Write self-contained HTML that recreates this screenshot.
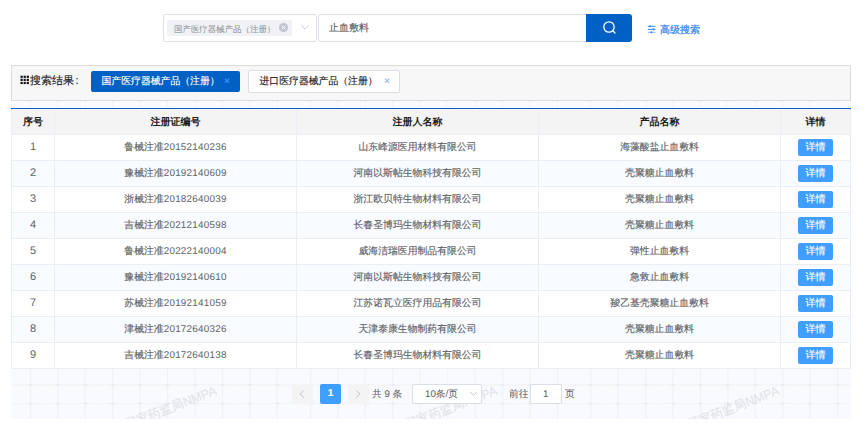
<!DOCTYPE html>
<html><head><meta charset="utf-8">
<style>
*{box-sizing:border-box;margin:0;padding:0}
html,body{width:867px;height:426px;overflow:hidden;background:#fff;font-family:"Liberation Sans",sans-serif;color:#606266;text-rendering:geometricPrecision;-webkit-text-stroke:0.15px currentColor}
.abs{position:absolute}
/* search */
#sel{left:163px;top:14px;width:154px;height:28px;border:1px solid #dcdfe6;border-radius:3px;background:#fff}
#seltag{left:167px;top:20px;width:125px;height:16px;background:#f0f2f5;border-radius:2px;font-size:8.45px;color:#909399;line-height:19px;padding-left:7px;white-space:nowrap;-webkit-text-stroke:0.05px currentColor}
#selx{left:279px;top:23px;width:9px;height:9px;border-radius:50%;background:#c0c4cc}
#inp{left:318px;top:14px;width:270px;height:28px;border:1px solid #dcdfe6;border-radius:3px 0 0 3px;background:#fff;font-size:10px;line-height:28px;padding-left:10px;color:#606266}
#btn{left:586px;top:14px;width:46px;height:28px;background:#0060c3;border-radius:0 3px 3px 0}
#adv{left:647px;top:24px;font-size:10px;color:#2f85f5;-webkit-text-stroke:0.25px currentColor;line-height:14px;white-space:nowrap}
/* result box */
#res{left:11px;top:65px;width:840px;height:36px;border:1px solid #dcdcdc;background:#f7f7f7}
#reslbl{left:30px;top:73px;font-size:11px;line-height:16px;color:#222;white-space:nowrap}
.tag{position:absolute;top:71px;height:21px;font-size:9.85px;line-height:21.5px;white-space:nowrap;padding-left:10.5px}
#tag1{left:91px;width:149px;background:#0060c3;color:#fff;border-radius:2px}
#tag2{left:248px;top:70px;height:23px;width:152px;background:#fff;border:1px solid #dcdfe6;border-radius:2px;color:#222;line-height:21.5px}
.tag .x{position:absolute;font-size:10px;color:#8ab6f0}
/* grid bg */
#grid{left:11px;top:101px;width:840px;height:318px;background-color:#f9fafd}
/* table */
#tbl{left:11px;top:108px;width:840px;border-collapse:collapse;table-layout:fixed}
#blue{left:11px;top:108px;width:840px;height:1px;background:#0a5fc4}
#tbl td,#tbl th{border:1px solid #ebeef5;text-align:center;font-size:10px;white-space:nowrap;padding:0}
#tbl th{height:26px;background:#f4f4f4;color:#1a1a1a;font-weight:bold;-webkit-text-stroke:0}
#tbl td{height:26px;background:#fff;color:#606266;font-size:9.85px;padding-bottom:1px}
.n{letter-spacing:0.25px;-webkit-text-stroke:0}
#tbl td.i{font-size:11px;-webkit-text-stroke:0;padding-bottom:0.5px}
#tbl tr.s td{background:#f8fbff}
.db{display:inline-block;width:35px;height:17px;line-height:17px;background:#409eff;color:#fff;border-radius:2px;font-size:10px;vertical-align:middle}
/* pagination */
.pb{position:absolute;top:384px;width:21px;height:20px;background:#f4f4f5;border-radius:2px;color:#c0c4cc;font-size:12px;line-height:20px;text-align:center}
#pg1{left:320px;background:#409eff;color:#fff;font-weight:bold;font-size:10px}
.pt{position:absolute;top:385px;font-size:9.7px;line-height:20px;color:#606266;white-space:nowrap;-webkit-text-stroke:0.05px currentColor}
#psz{left:412px;top:384px;width:70px;height:20px;border:1px solid #dcdfe6;border-radius:2px;background:#fff}
#pin{left:530px;top:384px;width:32px;height:20px;border:1px solid #dcdfe6;border-radius:2px;background:#fff;text-align:center}
.wm{position:absolute;font-size:13px;color:rgba(170,175,190,0.3);transform:rotate(-24deg);transform-origin:100% 100%;white-space:nowrap;font-weight:bold}
</style></head><body>
<div id="grid" class="abs"></div>
<svg class="abs" style="left:0;top:0" width="867" height="426" id="gridsvg"><rect x="29.90" y="101" width="1.2" height="318" fill="#f1f2f5"/><rect x="57.33" y="101" width="1.2" height="318" fill="#f1f2f5"/><rect x="84.76" y="101" width="1.2" height="318" fill="#f1f2f5"/><rect x="112.19" y="101" width="1.2" height="318" fill="#f1f2f5"/><rect x="139.62" y="101" width="1.2" height="318" fill="#f1f2f5"/><rect x="167.05" y="101" width="1.2" height="318" fill="#f1f2f5"/><rect x="194.48" y="101" width="1.2" height="318" fill="#f1f2f5"/><rect x="221.91" y="101" width="1.2" height="318" fill="#f1f2f5"/><rect x="249.34" y="101" width="1.2" height="318" fill="#f1f2f5"/><rect x="276.77" y="101" width="1.2" height="318" fill="#f1f2f5"/><rect x="310.00" y="101" width="1.2" height="318" fill="#f1f2f5"/><rect x="337.43" y="101" width="1.2" height="318" fill="#f1f2f5"/><rect x="364.86" y="101" width="1.2" height="318" fill="#f1f2f5"/><rect x="392.29" y="101" width="1.2" height="318" fill="#f1f2f5"/><rect x="419.72" y="101" width="1.2" height="318" fill="#f1f2f5"/><rect x="447.15" y="101" width="1.2" height="318" fill="#f1f2f5"/><rect x="474.58" y="101" width="1.2" height="318" fill="#f1f2f5"/><rect x="502.01" y="101" width="1.2" height="318" fill="#f1f2f5"/><rect x="529.44" y="101" width="1.2" height="318" fill="#f1f2f5"/><rect x="556.87" y="101" width="1.2" height="318" fill="#f1f2f5"/><rect x="590.10" y="101" width="1.2" height="318" fill="#f1f2f5"/><rect x="617.53" y="101" width="1.2" height="318" fill="#f1f2f5"/><rect x="644.96" y="101" width="1.2" height="318" fill="#f1f2f5"/><rect x="672.39" y="101" width="1.2" height="318" fill="#f1f2f5"/><rect x="699.82" y="101" width="1.2" height="318" fill="#f1f2f5"/><rect x="727.25" y="101" width="1.2" height="318" fill="#f1f2f5"/><rect x="754.68" y="101" width="1.2" height="318" fill="#f1f2f5"/><rect x="782.11" y="101" width="1.2" height="318" fill="#f1f2f5"/><rect x="809.54" y="101" width="1.2" height="318" fill="#f1f2f5"/><rect x="836.97" y="101" width="1.2" height="318" fill="#f1f2f5"/><rect x="11" y="365.80" width="840" height="1.2" fill="#f3f4f7"/><rect x="11" y="384.40" width="840" height="1.2" fill="#f3f4f7"/><rect x="11" y="403.00" width="840" height="1.2" fill="#f3f4f7"/><circle cx="30.50" cy="385" r="1.3" fill="#e9e9ee"/><rect x="27.50" y="384.5" width="6" height="1" fill="#ededf1"/><circle cx="30.50" cy="403.6" r="1.3" fill="#e9e9ee"/><rect x="27.50" y="403.1" width="6" height="1" fill="#ededf1"/><circle cx="57.93" cy="385" r="1.3" fill="#e9e9ee"/><rect x="54.93" y="384.5" width="6" height="1" fill="#ededf1"/><circle cx="57.93" cy="403.6" r="1.3" fill="#e9e9ee"/><rect x="54.93" y="403.1" width="6" height="1" fill="#ededf1"/><circle cx="85.36" cy="385" r="1.3" fill="#e9e9ee"/><rect x="82.36" y="384.5" width="6" height="1" fill="#ededf1"/><circle cx="85.36" cy="403.6" r="1.3" fill="#e9e9ee"/><rect x="82.36" y="403.1" width="6" height="1" fill="#ededf1"/><circle cx="112.79" cy="385" r="1.3" fill="#e9e9ee"/><rect x="109.79" y="384.5" width="6" height="1" fill="#ededf1"/><circle cx="112.79" cy="403.6" r="1.3" fill="#e9e9ee"/><rect x="109.79" y="403.1" width="6" height="1" fill="#ededf1"/><circle cx="140.22" cy="385" r="1.3" fill="#e9e9ee"/><rect x="137.22" y="384.5" width="6" height="1" fill="#ededf1"/><circle cx="140.22" cy="403.6" r="1.3" fill="#e9e9ee"/><rect x="137.22" y="403.1" width="6" height="1" fill="#ededf1"/><circle cx="167.65" cy="385" r="1.3" fill="#e9e9ee"/><rect x="164.65" y="384.5" width="6" height="1" fill="#ededf1"/><circle cx="167.65" cy="403.6" r="1.3" fill="#e9e9ee"/><rect x="164.65" y="403.1" width="6" height="1" fill="#ededf1"/><circle cx="195.08" cy="385" r="1.3" fill="#e9e9ee"/><rect x="192.08" y="384.5" width="6" height="1" fill="#ededf1"/><circle cx="195.08" cy="403.6" r="1.3" fill="#e9e9ee"/><rect x="192.08" y="403.1" width="6" height="1" fill="#ededf1"/><circle cx="222.51" cy="385" r="1.3" fill="#e9e9ee"/><rect x="219.51" y="384.5" width="6" height="1" fill="#ededf1"/><circle cx="222.51" cy="403.6" r="1.3" fill="#e9e9ee"/><rect x="219.51" y="403.1" width="6" height="1" fill="#ededf1"/><circle cx="249.94" cy="385" r="1.3" fill="#e9e9ee"/><rect x="246.94" y="384.5" width="6" height="1" fill="#ededf1"/><circle cx="249.94" cy="403.6" r="1.3" fill="#e9e9ee"/><rect x="246.94" y="403.1" width="6" height="1" fill="#ededf1"/><circle cx="277.37" cy="385" r="1.3" fill="#e9e9ee"/><rect x="274.37" y="384.5" width="6" height="1" fill="#ededf1"/><circle cx="277.37" cy="403.6" r="1.3" fill="#e9e9ee"/><rect x="274.37" y="403.1" width="6" height="1" fill="#ededf1"/><circle cx="310.60" cy="385" r="1.3" fill="#e9e9ee"/><rect x="307.60" y="384.5" width="6" height="1" fill="#ededf1"/><circle cx="310.60" cy="403.6" r="1.3" fill="#e9e9ee"/><rect x="307.60" y="403.1" width="6" height="1" fill="#ededf1"/><circle cx="338.03" cy="385" r="1.3" fill="#e9e9ee"/><rect x="335.03" y="384.5" width="6" height="1" fill="#ededf1"/><circle cx="338.03" cy="403.6" r="1.3" fill="#e9e9ee"/><rect x="335.03" y="403.1" width="6" height="1" fill="#ededf1"/><circle cx="365.46" cy="385" r="1.3" fill="#e9e9ee"/><rect x="362.46" y="384.5" width="6" height="1" fill="#ededf1"/><circle cx="365.46" cy="403.6" r="1.3" fill="#e9e9ee"/><rect x="362.46" y="403.1" width="6" height="1" fill="#ededf1"/><circle cx="392.89" cy="385" r="1.3" fill="#e9e9ee"/><rect x="389.89" y="384.5" width="6" height="1" fill="#ededf1"/><circle cx="392.89" cy="403.6" r="1.3" fill="#e9e9ee"/><rect x="389.89" y="403.1" width="6" height="1" fill="#ededf1"/><circle cx="420.32" cy="385" r="1.3" fill="#e9e9ee"/><rect x="417.32" y="384.5" width="6" height="1" fill="#ededf1"/><circle cx="420.32" cy="403.6" r="1.3" fill="#e9e9ee"/><rect x="417.32" y="403.1" width="6" height="1" fill="#ededf1"/><circle cx="447.75" cy="385" r="1.3" fill="#e9e9ee"/><rect x="444.75" y="384.5" width="6" height="1" fill="#ededf1"/><circle cx="447.75" cy="403.6" r="1.3" fill="#e9e9ee"/><rect x="444.75" y="403.1" width="6" height="1" fill="#ededf1"/><circle cx="475.18" cy="385" r="1.3" fill="#e9e9ee"/><rect x="472.18" y="384.5" width="6" height="1" fill="#ededf1"/><circle cx="475.18" cy="403.6" r="1.3" fill="#e9e9ee"/><rect x="472.18" y="403.1" width="6" height="1" fill="#ededf1"/><circle cx="502.61" cy="385" r="1.3" fill="#e9e9ee"/><rect x="499.61" y="384.5" width="6" height="1" fill="#ededf1"/><circle cx="502.61" cy="403.6" r="1.3" fill="#e9e9ee"/><rect x="499.61" y="403.1" width="6" height="1" fill="#ededf1"/><circle cx="530.04" cy="385" r="1.3" fill="#e9e9ee"/><rect x="527.04" y="384.5" width="6" height="1" fill="#ededf1"/><circle cx="530.04" cy="403.6" r="1.3" fill="#e9e9ee"/><rect x="527.04" y="403.1" width="6" height="1" fill="#ededf1"/><circle cx="557.47" cy="385" r="1.3" fill="#e9e9ee"/><rect x="554.47" y="384.5" width="6" height="1" fill="#ededf1"/><circle cx="557.47" cy="403.6" r="1.3" fill="#e9e9ee"/><rect x="554.47" y="403.1" width="6" height="1" fill="#ededf1"/><circle cx="590.70" cy="385" r="1.3" fill="#e9e9ee"/><rect x="587.70" y="384.5" width="6" height="1" fill="#ededf1"/><circle cx="590.70" cy="403.6" r="1.3" fill="#e9e9ee"/><rect x="587.70" y="403.1" width="6" height="1" fill="#ededf1"/><circle cx="618.13" cy="385" r="1.3" fill="#e9e9ee"/><rect x="615.13" y="384.5" width="6" height="1" fill="#ededf1"/><circle cx="618.13" cy="403.6" r="1.3" fill="#e9e9ee"/><rect x="615.13" y="403.1" width="6" height="1" fill="#ededf1"/><circle cx="645.56" cy="385" r="1.3" fill="#e9e9ee"/><rect x="642.56" y="384.5" width="6" height="1" fill="#ededf1"/><circle cx="645.56" cy="403.6" r="1.3" fill="#e9e9ee"/><rect x="642.56" y="403.1" width="6" height="1" fill="#ededf1"/><circle cx="672.99" cy="385" r="1.3" fill="#e9e9ee"/><rect x="669.99" y="384.5" width="6" height="1" fill="#ededf1"/><circle cx="672.99" cy="403.6" r="1.3" fill="#e9e9ee"/><rect x="669.99" y="403.1" width="6" height="1" fill="#ededf1"/><circle cx="700.42" cy="385" r="1.3" fill="#e9e9ee"/><rect x="697.42" y="384.5" width="6" height="1" fill="#ededf1"/><circle cx="700.42" cy="403.6" r="1.3" fill="#e9e9ee"/><rect x="697.42" y="403.1" width="6" height="1" fill="#ededf1"/><circle cx="727.85" cy="385" r="1.3" fill="#e9e9ee"/><rect x="724.85" y="384.5" width="6" height="1" fill="#ededf1"/><circle cx="727.85" cy="403.6" r="1.3" fill="#e9e9ee"/><rect x="724.85" y="403.1" width="6" height="1" fill="#ededf1"/><circle cx="755.28" cy="385" r="1.3" fill="#e9e9ee"/><rect x="752.28" y="384.5" width="6" height="1" fill="#ededf1"/><circle cx="755.28" cy="403.6" r="1.3" fill="#e9e9ee"/><rect x="752.28" y="403.1" width="6" height="1" fill="#ededf1"/><circle cx="782.71" cy="385" r="1.3" fill="#e9e9ee"/><rect x="779.71" y="384.5" width="6" height="1" fill="#ededf1"/><circle cx="782.71" cy="403.6" r="1.3" fill="#e9e9ee"/><rect x="779.71" y="403.1" width="6" height="1" fill="#ededf1"/><circle cx="810.14" cy="385" r="1.3" fill="#e9e9ee"/><rect x="807.14" y="384.5" width="6" height="1" fill="#ededf1"/><circle cx="810.14" cy="403.6" r="1.3" fill="#e9e9ee"/><rect x="807.14" y="403.1" width="6" height="1" fill="#ededf1"/><circle cx="837.57" cy="385" r="1.3" fill="#e9e9ee"/><rect x="834.57" y="384.5" width="6" height="1" fill="#ededf1"/><circle cx="837.57" cy="403.6" r="1.3" fill="#e9e9ee"/><rect x="834.57" y="403.1" width="6" height="1" fill="#ededf1"/><defs><clipPath id="gc"><rect x="11" y="101" width="840" height="318"/></clipPath></defs><g clip-path="url(#gc)"><text x="217.5" y="394" text-anchor="end" transform="rotate(-21 217.5 394)" font-size="12.5" font-weight="normal" fill="#d5d7df" fill-opacity="0.6" stroke="#d5d7df" stroke-opacity="0.4" stroke-width="0.3">国家药监局NMPA</text><text x="498" y="394" text-anchor="end" transform="rotate(-21 498 394)" font-size="12.5" font-weight="normal" fill="#d5d7df" fill-opacity="0.6" stroke="#d5d7df" stroke-opacity="0.4" stroke-width="0.3">国家药监局NMPA</text><text x="780" y="394" text-anchor="end" transform="rotate(-21 780 394)" font-size="12.5" font-weight="normal" fill="#d5d7df" fill-opacity="0.6" stroke="#d5d7df" stroke-opacity="0.4" stroke-width="0.3">国家药监局NMPA</text></g></svg>

<div id="sel" class="abs"></div>
<div id="seltag" class="abs">国产医疗器械产品（注册）</div>
<div id="selx" class="abs"></div>
<svg class="abs" style="left:279px;top:23px" width="9" height="9" viewBox="0 0 9 9"><path d="M2.7 2.7L6.3 6.3M6.3 2.7L2.7 6.3" stroke="#fff" stroke-width="1"/></svg>
<svg class="abs" style="left:300px;top:24px" width="10" height="7" viewBox="0 0 10 7"><path d="M1.2 1.2L5 5L8.8 1.2" fill="none" stroke="#c0c4cc" stroke-width="0.8"/></svg>
<div id="inp" class="abs">止血敷料</div>
<div id="btn" class="abs"></div>
<svg class="abs" style="left:601px;top:19px" width="17" height="17" viewBox="0 0 17 17"><circle cx="8" cy="8" r="5.2" fill="none" stroke="#fff" stroke-width="1.3"/><path d="M11.8 11.8L14 14" stroke="#fff" stroke-width="1.3" stroke-linecap="round"/></svg>
<svg class="abs" style="left:640px;top:20px" width="20" height="18" viewBox="640 20 20 18"><g fill="#3d8cfb"><rect x="647.8" y="25.8" width="7.8" height="1"/><rect x="647.8" y="28.9" width="7.8" height="1"/><rect x="647.8" y="31.8" width="7.8" height="1" fill-opacity="0.6"/><circle cx="650" cy="26.3" r="1.1"/><circle cx="653.5" cy="29.4" r="1.1"/><circle cx="651.5" cy="32.3" r="1.1"/></g></svg>
<div id="adv" class="abs" style="left:660px">高级搜索</div>

<div id="res" class="abs"></div>
<svg class="abs" style="left:0;top:0" width="40" height="100"><g fill="#111"><rect x="20.5" y="75.7" width="2.2" height="2.2"/><rect x="23.6" y="75.7" width="2.2" height="2.2"/><rect x="26.7" y="75.7" width="2.2" height="2.2"/><rect x="20.5" y="78.8" width="2.2" height="2.2"/><rect x="23.6" y="78.8" width="2.2" height="2.2"/><rect x="26.7" y="78.8" width="2.2" height="2.2"/><rect x="20.5" y="81.9" width="2.2" height="2.2"/><rect x="23.6" y="81.9" width="2.2" height="2.2"/><rect x="26.7" y="81.9" width="2.2" height="2.2"/></g></svg>
<div id="reslbl" class="abs">搜索结果<span style="margin-left:1.5px">:</span></div>
<div class="tag" id="tag1">国产医疗器械产品（注册）<span class="x" style="left:133px;top:-0.5px;color:#3f9bff">×</span></div>
<div class="tag" id="tag2">进口医疗器械产品（注册）<span class="x" style="left:135px">×</span></div>

<table id="tbl" class="abs">
<colgroup><col style="width:43px"><col style="width:242px"><col style="width:242px"><col style="width:242px"><col style="width:70px"></colgroup>
<tr><th>序号</th><th>注册证编号</th><th>注册人名称</th><th>产品名称</th><th>详情</th></tr>
<tr><td class="i">1</td><td>鲁械注准<span class="n">20152140236</span></td><td>山东峰源医用材料有限公司</td><td>海藻酸盐止血敷料</td><td><span class="db">详情</span></td></tr>
<tr class="s"><td class="i">2</td><td>豫械注准<span class="n">20192140609</span></td><td>河南以斯帖生物科技有限公司</td><td>壳聚糖止血敷料</td><td><span class="db">详情</span></td></tr>
<tr><td class="i">3</td><td>浙械注准<span class="n">20182640039</span></td><td>浙江欧贝特生物材料有限公司</td><td>壳聚糖止血敷料</td><td><span class="db">详情</span></td></tr>
<tr class="s"><td class="i">4</td><td>吉械注准<span class="n">20212140598</span></td><td>长春圣博玛生物材料有限公司</td><td>壳聚糖止血敷料</td><td><span class="db">详情</span></td></tr>
<tr><td class="i">5</td><td>鲁械注准<span class="n">20222140004</span></td><td>威海洁瑞医用制品有限公司</td><td>弹性止血敷料</td><td><span class="db">详情</span></td></tr>
<tr class="s"><td class="i">6</td><td>豫械注准<span class="n">20192140610</span></td><td>河南以斯帖生物科技有限公司</td><td>急救止血敷料</td><td><span class="db">详情</span></td></tr>
<tr><td class="i">7</td><td>苏械注准<span class="n">20192141059</span></td><td>江苏诺瓦立医疗用品有限公司</td><td>羧乙基壳聚糖止血敷料</td><td><span class="db">详情</span></td></tr>
<tr class="s"><td class="i">8</td><td>津械注准<span class="n">20172640326</span></td><td>天津泰康生物制药有限公司</td><td>壳聚糖止血敷料</td><td><span class="db">详情</span></td></tr>
<tr><td class="i">9</td><td>吉械注准<span class="n">20172640138</span></td><td>长春圣博玛生物材料有限公司</td><td>壳聚糖止血敷料</td><td><span class="db">详情</span></td></tr>
</table>
<div id="blue" class="abs"></div>
<div class="abs" style="left:11px;top:107px;width:840px;height:1px;background:#fff"></div>

<div class="pb" style="left:292px"></div><svg class="abs" style="left:298px;top:389px" width="8" height="10" viewBox="0 0 8 10"><path d="M5.8 1.4L2.2 5L5.8 8.6" fill="none" stroke="#c0c4cc" stroke-width="1"/></svg>
<div class="pb" id="pg1">1</div>
<div class="pb" style="left:348px"></div><svg class="abs" style="left:354px;top:389px" width="8" height="10" viewBox="0 0 8 10"><path d="M2.2 1.4L5.8 5L2.2 8.6" fill="none" stroke="#c0c4cc" stroke-width="1"/></svg>
<div class="pt" style="left:372px">共 9 条</div>
<div id="psz" class="abs"></div>
<div class="pt" style="left:425px">10条/页</div>
<svg class="abs" style="left:469px;top:391px" width="9" height="6" viewBox="0 0 9 6"><path d="M1 1L4.5 4.5L8 1" fill="none" stroke="#c0c4cc" stroke-width="0.9"/></svg>
<div class="pt" style="left:509px">前往</div>
<div id="pin" class="abs"></div>
<div class="pt" style="left:543px">1</div>
<div class="pt" style="left:565px">页</div>
</body></html>
